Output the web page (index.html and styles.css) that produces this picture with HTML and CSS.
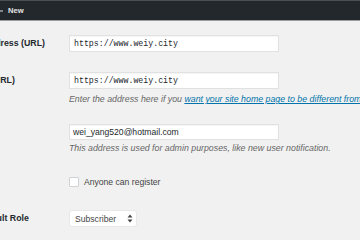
FILE: index.html
```html
<!DOCTYPE html>
<html lang="en">

<head>
    <meta charset="UTF-8">
    <meta name="viewport" content="width=device-width, initial-scale=1.0">
    <title>General Settings</title>
    <link rel="stylesheet" href="styles.css">
</head>

<body>
    <div class="adminbar">
        <span class="new-item">
            <svg class="plus" width="10" height="10" viewBox="0 0 10 10">
                <path d="M1 5h8M5 1v8" stroke="#a0a5aa" stroke-width="1.6" />
            </svg>
            <span>New</span>
        </span>
    </div>

    <div class="form-table">
        <div class="row row-siteurl">
            <div class="label">WordPress Address (URL)</div>
            <div class="field">
                <input type="text" class="text url" value="https://www.weiy.city">
            </div>
        </div>

        <div class="row row-home">
            <div class="label">Site Address (URL)</div>
            <div class="field">
                <input type="text" class="text url" value="https://www.weiy.city">
                <p class="description">Enter the address here if you <a href="#">want your site home page to be different from your WordPress installation directory.</a></p>
            </div>
        </div>

        <div class="row row-email">
            <div class="label">Email Address</div>
            <div class="field">
                <input type="text" class="text email" value="wei_yang520@hotmail.com">
                <p class="description">This address is used for admin purposes, like new user notification.</p>
            </div>
        </div>

        <div class="row row-members">
            <div class="label">Membership</div>
            <div class="field">
                <label class="check"><span class="box"></span>Anyone can register</label>
            </div>
        </div>

        <div class="row row-role">
            <div class="label">New User Default Role</div>
            <div class="field">
                <div class="select">
                    <span>Subscriber</span>
                    <svg width="6" height="9" viewBox="0 0 6 9">
                        <path d="M3 0.5L5.5 3.5H0.5Z M3 8.5L5.5 5.5H0.5Z" fill="#444" />
                    </svg>
                </div>
            </div>
        </div>
    </div>
</body>

</html>
```

FILE: styles.css
```css
* {
    margin: 0;
    padding: 0;
    box-sizing: border-box;
}

html,
body {
    overflow: hidden;
}

body {
    background-color: #f1f1f1;
    font-family: "Liberation Sans", Arial, sans-serif;
    font-size: 8.6px;
    color: #23282d;
    width: 360px;
    height: 240px;
}

.adminbar {
    height: 21px;
    background-color: #23282d;
    border-top: 1px solid #4b4f54;
    border-bottom: 1px solid #9a9da0;
    display: flex;
    align-items: center;
}

.new-item {
    display: flex;
    align-items: center;
    gap: 4px;
    margin-left: -6px;
    color: #e6e6e6;
    font-weight: bold;
    font-size: 7.6px;
}

.form-table {
    margin-left: -65px;
    width: 600px;
}

.row {
    display: grid;
    grid-template-columns: 134px 1fr;
}

.label {
    font-weight: bold;
    font-size: 8.8px;
    line-height: 17px;
}

.row-siteurl {
    margin-top: 14px;
}

.row-home {
    margin-top: 20px;
}

.row-email {
    margin-top: 19px;
}

.row-members {
    margin-top: 23px;
}

.row-role {
    margin-top: 24px;
}

.text {
    display: block;
    width: 210px;
    height: 17px;
    background-color: #fff;
    border: 1px solid #e1e1e1;
    box-shadow: inset 0 1px 1px rgba(0, 0, 0, 0.04);
    padding: 0 4px;
    color: #23282d;
    outline: none;
}

.url {
    font-family: "Liberation Mono", monospace;
    font-size: 8.25px;
}

.email {
    height: 16px;
    font-family: "Liberation Sans", Arial, sans-serif;
    font-size: 8.6px;
    padding: 0 3px;
}

.description {
    margin-top: 5px;
    line-height: 11px;
    font-size: 8.8px;
    font-style: italic;
    color: #666;
    white-space: nowrap;
}

.row-email .description {
    margin-top: 3px;
}

.description a {
    color: #0073aa;
}

.row-members .label {
    line-height: 10px;
}

.check {
    display: flex;
    align-items: center;
    gap: 5px;
    height: 10px;
    color: #444;
}

.box {
    width: 10px;
    height: 10px;
    background-color: #fff;
    border: 1px solid #cfd2d5;
    border-radius: 1px;
}

.row-role .label {
    line-height: 15px;
}

.select {
    margin-left: 1px;
    width: 66px;
    height: 15px;
    background-color: #fff;
    border-radius: 2px;
    box-shadow: 0 0 0 1px #e8e8e8;
    display: flex;
    align-items: center;
    justify-content: space-between;
    padding: 0 3px 0 5px;
    color: #444;
}
```
